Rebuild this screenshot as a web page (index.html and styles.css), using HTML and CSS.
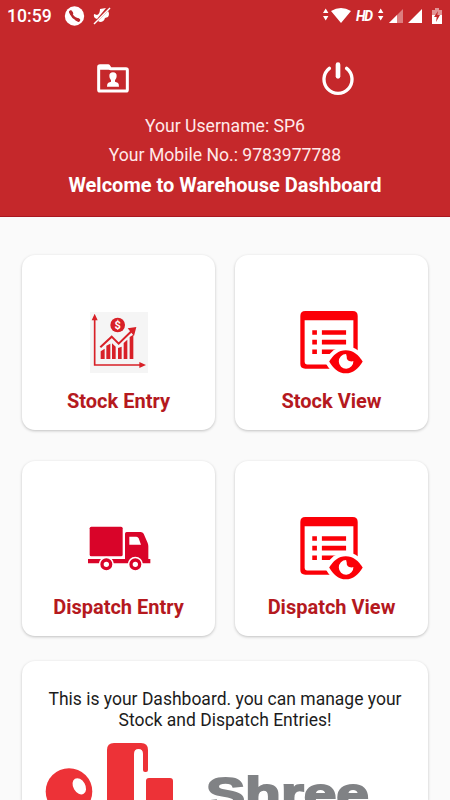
FILE: index.html
```html
<!DOCTYPE html>
<html lang="en">
<head>
<meta charset="utf-8">
<title>Warehouse Dashboard</title>
<link rel="stylesheet" href="styles.css">
</head>
<body>
<svg width="0" height="0" class="defs">
  <symbol id="view" viewBox="0 0 188 190">
    <path fill="#fb0007" fill-rule="evenodd" d="M15 0H158Q173 0 173 15V160Q173 174 158 174H15Q0 174 0 160V15Q0 0 15 0ZM13 28V154Q13 161 20 161H153Q160 161 160 154V28Z"/>
    <path fill="#fb0007" d="M36 58h14v14h-14zM65 58h73v14h-73zM36 87h14v14h-14zM65 87h73v14h-73zM36 116h14v14h-14zM65 116h50v14h-50z"/>
    <path fill="#fb0007" stroke="#fff" stroke-width="24" stroke-linejoin="round" paint-order="stroke" d="M87 152C99 132 115 118 137 118S176 132 188 152C176 173 159 188 137 188S99 173 87 152Z"/>
    <path fill="#fff" d="M138 130A22 22 0 1 0 160 151Q156 154 147 151Q139 147 140 138Z"/>
  </symbol>
</svg>
<header class="header">
  <div class="status">
    <span class="clock">10:59</span>
    <svg class="notices" width="50" height="22" viewBox="0 0 50 22">
      <circle cx="10.500" cy="11" r="9.700" fill="#fff"/>
      <path fill="none" stroke="#b9272c" stroke-width="2.400" stroke-linecap="round" d="M6.800 7Q7.500 12.500 14.500 15"/>
      <path stroke="#b9272c" stroke-width="3.500" stroke-linecap="round" d="M6.700 7l.8 1.400M13 14.500l1.500.6"/>
      <path fill="#fff" d="M36 4l6-1-9 11q-4-1-3-5l3 1q3-1 3-6zM44 6q2 3 0 6l-3 1q-1 4-5 4l-2-1z"/>
      <path stroke="#fff" stroke-width="1.500" d="M46 3L30 19"/>
    </svg>
    <svg class="signals" width="124" height="22" viewBox="0 0 124 22">
      <g fill="#fff">
        <path d="M4 8l2.700-4.500L9.400 8zM4 11h5.400l-2.700 4.500zM12 6q10-6 20 0L22 18zM59 8l2.700-4.500L64.400 8zM59 11h5.400l-2.700 4.500z"/>
        <path d="M70 18L84 4v14z" opacity=".4"/><path d="M70 18l8-8v8zM89 18L103 4v14z"/>
        <path d="M113 5h3V3h4v2h3v5h-10z" opacity=".5"/><path d="M113 10h10v9h-10z"/>
      </g>
      <path fill="#c5282b" d="M119 6l-4 6h2.700l-.7 5 4-7h-2.700z"/>
      <text x="37" y="15.500" class="hd" textLength="17">HD</text>
    </svg>
  </div>
  <div class="actions">
    <svg width="32" height="29" viewBox="0 0 96 87">
      <path fill="none" stroke="#fff" stroke-width="9" stroke-linejoin="round" d="M5 14V77Q5 81 9 81H87Q91 81 91 77V18Q91 14 87 14H40L34 5H9Q5 5 5 9Z"/>
      <path fill="#fff" d="M5 5h30l5 12H5zM48 25Q59 25 59 36Q59 44 54 49V53L62 56Q66 58 66 68H30Q30 58 34 56L42 53V49Q37 44 37 36Q37 25 48 25Z"/>
    </svg>
    <svg width="32" height="33" viewBox="0 0 96 99">
      <path fill="none" stroke="#fff" stroke-width="10" stroke-linecap="round" d="M22 19A42 42 0 1 0 74 19"/>
      <path stroke="#fff" stroke-width="14" stroke-linecap="round" d="M48 8V43"/>
    </svg>
  </div>
  <p class="info">Your Username: SP6</p>
  <p class="info mobile">Your Mobile No.: 9783977788</p>
  <h1 class="welcome">Welcome to Warehouse Dashboard</h1>
</header>
<main class="main">
  <div class="grid">
    <section class="card">
      <div class="picture">
        <svg width="58" height="61" viewBox="0 0 174 183">
          <path fill="#f5f5f5" d="M0 0h174v183H0z"/>
          <g fill="#d82027">
            <path d="M5 25L14 5l9 20zM148 150l20 9-20 9zM113 49l26-4-7 27zM32 118l12-8v31H32zM49 101l12-6v46H49zM66 94l11 10v37H66zM84 108l11-4v37H84zM101 93l11-10v58h-11zM119 75l11-7v73h-11z"/>
            <circle cx="83" cy="39" r="22"/>
          </g>
          <path fill="none" stroke="#d82027" stroke-width="5" d="M14 20V159H153"/>
          <path fill="none" stroke="#d82027" stroke-width="6" d="M31 106L65 74L86 95L125 57"/>
          <text x="83" y="50" class="dollar">$</text>
        </svg>
      </div>
      <h2>Stock Entry</h2>
    </section>
    <section class="card">
      <div class="picture view"><svg width="63" height="63"><use href="#view"/></svg></div>
      <h2>Stock View</h2>
    </section>
    <section class="card">
      <div class="picture truck">
        <svg width="63" height="46" viewBox="0 0 189 138">
          <g fill="#d90429">
            <rect x="5" y="2" width="99" height="89" rx="5"/>
            <path fill-rule="evenodd" d="M0 99H111V23Q111 18 116 18H158Q164 18 167 23L179 51Q181 56 181 61V99H187V112H0ZM124 32V56H159L152 37Q150 32 145 32Z"/>
          </g>
          <g fill="#fff" stroke="#d90429" stroke-width="10">
            <circle cx="55" cy="115" r="23" stroke="none"/><circle cx="142" cy="115" r="23" stroke="none"/>
            <circle cx="55" cy="115" r="13"/><circle cx="142" cy="115" r="13"/>
          </g>
        </svg>
      </div>
      <h2>Dispatch Entry</h2>
    </section>
    <section class="card">
      <div class="picture view"><svg width="63" height="63"><use href="#view"/></svg></div>
      <h2>Dispatch View</h2>
    </section>
  </div>
  <section class="card about">
    <p>This is your Dashboard. you can manage your<br>Stock and Dispatch Entries!</p>
    <svg class="logo" width="330" height="57" viewBox="0 0 330 57">
      <path fill="#ed3237" d="M62 62V7Q62 0 69 0H96Q103 0 103 7V27Q103 29 101 29H100Q98 29 98 27V11Q98 6 93.500 6T89 11V62ZM101 62V38Q101 35 104 35H125Q128 35 128 38V62Z"/>
      <circle cx="24" cy="48.500" r="23.300" fill="#ed3237"/>
      <ellipse cx="34.300" cy="43.300" rx="6" ry="8.700" transform="rotate(-30 34.300 43.300)" fill="#fff"/>
      <text x="161" y="67" class="brand" textLength="163" lengthAdjust="spacingAndGlyphs">Shree</text>
    </svg>
  </section>
</main>
</body>
</html>
```
FILE: styles.css
```css
* { box-sizing: border-box; margin: 0; padding: 0; }
html, body { height: 800px; overflow: hidden; }
body {
  display: flex;
  flex-direction: column;
  background: #fafafa;
  font-family: Roboto, "Liberation Sans", sans-serif;
}
svg { display: block; }
.defs { position: absolute; }
.header {
  flex: none;
  height: 217px;
  background: #c5282b;
  border-bottom: 1px solid #a91720;
  color: #fff;
  text-align: center;
}
.status { display: flex; align-items: center; height: 30px; padding: 1px 7px 0; }
.clock { width: 45px; text-align: left; font-size: 17.6px; font-weight: 500; line-height: 30px; }
.notices { margin-left: 12px; }
.signals { margin-left: auto; }
.hd { fill: #fff; font-size: 14px; font-weight: 700; font-style: italic; }
.actions { display: grid; grid-template-columns: 1fr 1fr; place-items: center; height: 86px; padding: 13px 0 3px; }
.info { color: #ffe9e9; font-size: 17.6px; line-height: 21px; height: 28.5px; }
.welcome { font-size: 20px; font-weight: 700; line-height: 24px; }
.main { flex: 1; min-height: 0; padding: 38px 22px 0; overflow: hidden; }
.grid { display: grid; grid-template-columns: 193px 193px; column-gap: 20px; row-gap: 31px; }
.card {
  height: 175px;
  border-radius: 13px;
  background: #fff;
  box-shadow: 0 1px 3px rgba(0, 0, 0, .23);
  text-align: center;
}
.picture { display: flex; justify-content: center; height: 133.5px; padding-top: 57px; }
.picture.view { padding-top: 56px; }
.picture.truck { padding: 65px 0 0 1px; }
.dollar { fill: #fff; font-size: 33px; font-weight: 700; text-anchor: middle; }
h2 { color: #b5191e; font-size: 20px; font-weight: 700; line-height: 24px; }
.about { height: 139px; margin-top: 25px; padding-top: 28px; border-radius: 13px 13px 0 0; }
.about p { color: #1c1c1c; font-size: 17.5px; line-height: 21px; }
.logo { margin: 12px 0 0 23px; }
.brand {
  fill: #808285;
  stroke: #808285;
  stroke-width: 2px;
  font-family: "Liberation Sans", sans-serif;
  font-size: 47px;
  font-weight: 700;
}
```
